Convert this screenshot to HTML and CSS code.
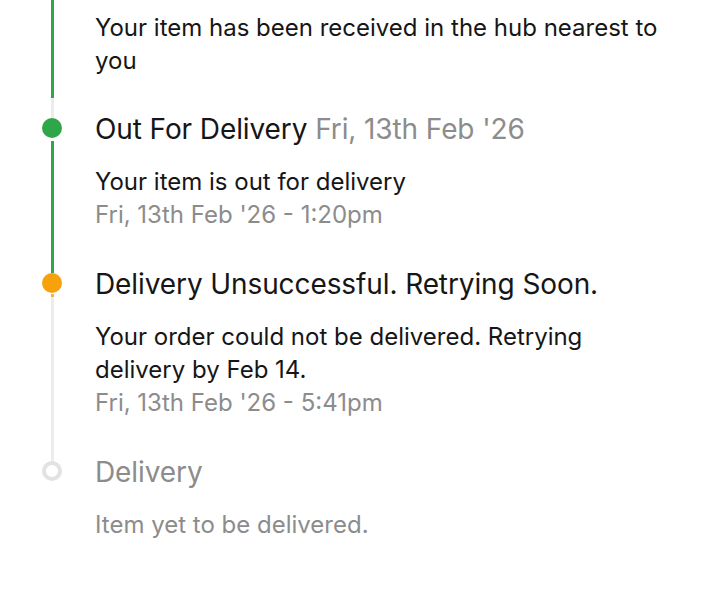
FILE: index.html
```html
<!DOCTYPE html>
<html lang="en">
<head>
  <meta charset="UTF-8">
  <meta name="viewport" content="width=device-width, initial-scale=1.0">
  <title>Tracking</title>
  <link rel="stylesheet" href="styles.css">
</head>
<body>
  <ol class="timeline">
    <li class="step step-first">
      <div class="rail">
        <span class="line done"></span>
        <span class="line tail"></span>
      </div>
      <div class="info">
        <p class="desc">Your item has been received in the hub nearest to you</p>
      </div>
    </li>

    <li class="step">
      <div class="rail">
        <span class="stem"></span>
        <span class="dot done"></span>
        <span class="line done gap"></span>
      </div>
      <div class="info">
        <h3 class="title">Out For Delivery <span class="when">Fri, 13th Feb '26</span></h3>
        <p class="desc">Your item is out for delivery</p>
        <p class="stamp">Fri, 13th Feb '26 - 1:20pm</p>
      </div>
    </li>

    <li class="step">
      <div class="rail">
        <span class="stem done"></span>
        <span class="dot warn"></span>
        <span class="nub"></span>
        <span class="line"></span>
      </div>
      <div class="info">
        <h3 class="title">Delivery Unsuccessful. Retrying Soon.</h3>
        <p class="desc">Your order could not be delivered. Retrying delivery by Feb 14.</p>
        <p class="stamp">Fri, 13th Feb '26 - 5:41pm</p>
      </div>
    </li>

    <li class="step step-pending">
      <div class="rail">
        <span class="stem"></span>
        <span class="dot ring"></span>
      </div>
      <div class="info">
        <h3 class="title">Delivery</h3>
        <p class="desc">Item yet to be delivered.</p>
      </div>
    </li>
  </ol>
</body>
</html>
```

FILE: styles.css
```css
/* base */
body { margin: 0; background: #fff; font-family: Inter, "Noto Sans", sans-serif; color: #161616; }
p, h3 { margin: 0; }

/* timeline */
.timeline { list-style: none; margin: 0; padding: 0 50px 0 0; }
.step { display: flex; }
.rail { flex: none; display: flex; flex-direction: column; align-items: center; width: 20px; margin: 0 33px 0 42px; }
.info { flex: 1; padding-bottom: 37px; }
.step-first .info { padding-top: 11px; padding-bottom: 36px; }

.line { width: 3px; flex: 1; background: #ececec; }
.line.done { background: #2fa648; }
.line.tail { flex: none; height: 15px; background: #ececec; }
.line.gap { margin-top: 3px; }
.stem { width: 3px; height: 5px; background: #ececec; }
.stem.done { background: #2fa648; }
.nub { width: 3px; height: 3px; margin-top: 1px; background: #f6b04a; }

.dot { width: 20px; height: 20px; border-radius: 50%; box-sizing: border-box; flex: none; }
.dot.done { background: #2fa648; }
.dot.warn { background: #f7a10d; }
.dot.ring { border: 4px solid #e2e2e2; background: #fff; }

.title { font-weight: 400; font-size: 28px; line-height: 32px; margin-bottom: 20px; letter-spacing: -0.1px; }
.when { color: #8c8c8c; }
.desc { font-size: 24px; line-height: 33px; }
.stamp { font-size: 24px; line-height: 33px; color: #8c8c8c; }
.step-pending .title, .step-pending .desc { color: #8c8c8c; }
```
